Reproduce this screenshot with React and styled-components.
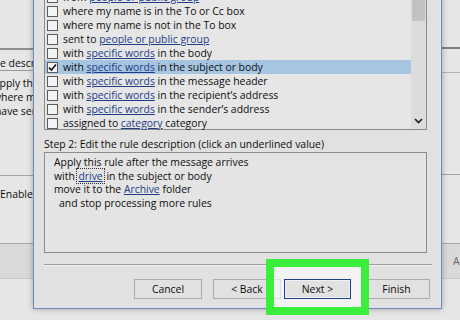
import React from 'react';
import styled, { createGlobalStyle } from 'styled-components';

const GlobalStyle = createGlobalStyle`
  html, body {
    margin: 0;
    padding: 0;
  }
  body {
    background: #e6e6e6;
    font-family: "Open Sans", "Noto Sans", Arial, sans-serif;
    color: #0d0d0d;
  }
`;

const Screen = styled.div`
  position: relative;
  display: flex;
  width: 460px;
  height: 320px;
  overflow: hidden;
  background: #e6e6e6;
`;

const SidePane = styled.div`
  flex: ${p => (p.$grow ? 1 : 'none')};
  width: ${p => (p.$grow ? 'auto' : '33px')};
  display: flex;
  flex-direction: column;
  overflow: hidden;
  font-size: 10.4px;
  line-height: 14px;
`;

const Gap = styled.div`
  height: ${p => p.$h}px;
  flex: none;
`;

const Rule = styled.div`
  height: ${p => p.$w || 1}px;
  background: ${p => p.$c || '#9a9a9a'};
  flex: none;
`;

const Clip = styled.div`
  white-space: nowrap;
  margin-left: ${p => p.$shift || 0}px;
  height: 14px;
  flex: none;
`;

const Band = styled.div`
  height: 34px;
  flex: none;
  background: #d9d9d9;
  border-top: 1px solid #a8a8a8;
  border-bottom: 1px solid #c8c8c8;
  display: flex;
  align-items: center;
  white-space: nowrap;
  padding-left: ${p => p.$pad || 0}px;
  color: #666;
`;

const Dialog = styled.div`
  flex: none;
  width: 409px;
  height: 323px;
  margin-top: -14px;
  background: #e1e1e1;
  border: 1px solid #6d8cbd;
  box-shadow: 0 0 6px rgba(0, 0, 0, 0.3);
  padding: 0 14px 0 10px;
  box-sizing: border-box;
  display: flex;
  flex-direction: column;
  font-size: 10.4px;
  z-index: 1;
`;

const ListBox = styled.div`
  height: 143px;
  flex: none;
  border: 1px solid #8b8b8b;
  background: #e6e6e6;
  display: flex;
  box-sizing: border-box;
`;

const Rows = styled.div`
  flex: 1;
  display: flex;
  flex-direction: column;
  padding-top: 2px;
`;

const Row = styled.div`
  height: 14px;
  flex: none;
  display: flex;
  align-items: center;
  gap: 5px;
  padding-left: 2px;
  white-space: nowrap;
  background: ${p => (p.$selected ? '#a6c5e1' : 'transparent')};
`;

const Box = styled.span`
  width: 11px;
  height: 11px;
  box-sizing: border-box;
  border: 1px solid #5c5c5c;
  background: #f3f3f3;
  display: flex;
  align-items: center;
  justify-content: center;
  flex: none;
`;

const Link = styled.span`
  color: #1f3c87;
  text-decoration: underline;
  text-underline-offset: 1px;
`;

const Focus = styled.span`
  outline: 1px dotted #333;
  padding: 0 1px;
`;

const ScrollBar = styled.div`
  width: 15px;
  background: #dcdcdc;
  display: flex;
  flex-direction: column;
  justify-content: space-between;
  align-items: center;
`;

const Thumb = styled.div`
  width: 13px;
  height: 33px;
  background: #c2c2c2;
`;

const ArrowCell = styled.div`
  height: 17px;
  display: flex;
  align-items: center;
  justify-content: center;
`;

const StepLabel = styled.div`
  margin-top: 7px;
  height: 14px;
  line-height: 14px;
  white-space: nowrap;
`;

const DescBox = styled.div`
  margin-top: 1px;
  height: 101px;
  flex: none;
  box-sizing: border-box;
  border: 1px solid #8b8b8b;
  background: #e4e4e4;
  padding: 3px 7px 3px 9px;
  line-height: 13.5px;
`;

const DescLine = styled.div`
  white-space: nowrap;
  padding-left: ${p => (p.$indent ? 5 : 0)}px;
`;

const Separator = styled.div`
  margin-top: 11px;
  margin-right: -5px;
  height: 1px;
  flex: none;
  background: #9d9d9d;
  border-bottom: 1px solid #f4f4f4;
`;

const ButtonRow = styled.div`
  margin-top: 13px;
  margin-right: -3px;
  display: flex;
  justify-content: flex-end;
`;

const Button = styled.button`
  position: relative;
  z-index: ${p => (p.$default ? 3 : 'auto')};
  width: ${p => p.$w || 68}px;
  height: 20px;
  margin-left: ${p => p.$gap || 0}px;
  background: #e1e1e1;
  border: 1px solid ${p => (p.$default ? '#1e3f8c' : '#adadad')};
  box-shadow: ${p => (p.$default ? 'inset 0 0 0 1px #eef1f7' : 'none')};
  font-family: inherit;
  font-size: 10.4px;
  color: #0d0d0d;
  padding: 0;
`;

const Highlight = styled.div`
  position: absolute;
  left: 266px;
  top: 259px;
  width: 103px;
  height: 56px;
  box-sizing: border-box;
  border: 8px solid #3bee3b;
  background: rgba(255, 255, 255, 0.6);
  pointer-events: none;
  z-index: 2;
`;

const Check = () => (
  <svg width="9" height="9" viewBox="0 0 9 9">
    <path d="M1 4.6 L3.4 7 L8 1.5" fill="none" stroke="#111" strokeWidth="1.6" />
  </svg>
);

const Chevron = () => (
  <svg width="9" height="6" viewBox="0 0 9 6">
    <path d="M1 1 L4.5 4.5 L8 1" fill="none" stroke="#222" strokeWidth="1.7" />
  </svg>
);

const rules = [
  [{ t: 'from ' }, { t: 'people or public group', link: true }],
  [{ t: 'where my name is in the To or Cc box' }],
  [{ t: 'where my name is not in the To box' }],
  [{ t: 'sent to ' }, { t: 'people or public group', link: true }],
  [{ t: 'with ' }, { t: 'specific words', link: true }, { t: ' in the body' }],
  [{ t: 'with ' }, { t: 'specific words', link: true }, { t: ' in the subject or body' }],
  [{ t: 'with ' }, { t: 'specific words', link: true }, { t: ' in the message header' }],
  [{ t: 'with ' }, { t: 'specific words', link: true }, { t: ' in the recipient\u2019s address' }],
  [{ t: 'with ' }, { t: 'specific words', link: true }, { t: ' in the sender\u2019s address' }],
  [{ t: 'assigned to ' }, { t: 'category', link: true }, { t: ' category' }],
];

const App = () => (
  <Screen>
    <GlobalStyle />
    <SidePane>
      <Gap $h={48} />
      <Rule $w={2} $c="#8f8f8f" />
      <Gap $h={6} />
      <Clip>e description</Clip>
      <Rule $c="#9a9a9a" />
      <Gap $h={5} />
      <Clip $shift={-7}>Apply this rule</Clip>
      <Clip $shift={-7}>where my name</Clip>
      <Clip $shift={-5}>have sent</Clip>
      <Gap $h={57} />
      <Rule $c="#a5a5a5" />
      <Gap $h={11} />
      <Clip>Enable</Clip>
      <Gap $h={42} />
      <Band />
    </SidePane>

    <Dialog>
      <ListBox>
        <Rows>
          {rules.map((parts, i) => (
            <Row key={i} $selected={i === 5}>
              <Box>{i === 5 && <Check />}</Box>
              <span>
                {parts.map((p, j) =>
                  p.link ? <Link key={j}>{p.t}</Link> : <React.Fragment key={j}>{p.t}</React.Fragment>
                )}
              </span>
            </Row>
          ))}
        </Rows>
        <ScrollBar>
          <Thumb />
          <ArrowCell>
            <Chevron />
          </ArrowCell>
        </ScrollBar>
      </ListBox>

      <StepLabel>Step 2: Edit the rule description (click an underlined value)</StepLabel>
      <DescBox>
        <DescLine>Apply this rule after the message arrives</DescLine>
        <DescLine>
          with <Focus><Link>drive</Link></Focus> in the subject or body
        </DescLine>
        <DescLine>
          move it to the <Link>Archive</Link> folder
        </DescLine>
        <DescLine $indent>and stop processing more rules</DescLine>
      </DescBox>

      <Separator />
      <ButtonRow>
        <Button>Cancel</Button>
        <Button $gap={11}>&lt; Back</Button>
        <Button $gap={3} $w={67} $default>Next &gt;</Button>
        <Button $gap={12} $w={67}>Finish</Button>
      </ButtonRow>

      <Highlight />
    </Dialog>

    <SidePane $grow>
      <Gap $h={47} />
      <Rule $w={2} $c="#7f7f7f" />
      <Gap $h={23} />
      <Rule $c="#b3b3b3" />
      <Gap $h={101} />
      <Rule $c="#a5a5a5" />
      <Gap $h={68} />
      <Band $pad={11}>Apply</Band>
    </SidePane>
  </Screen>
);

export default App;
